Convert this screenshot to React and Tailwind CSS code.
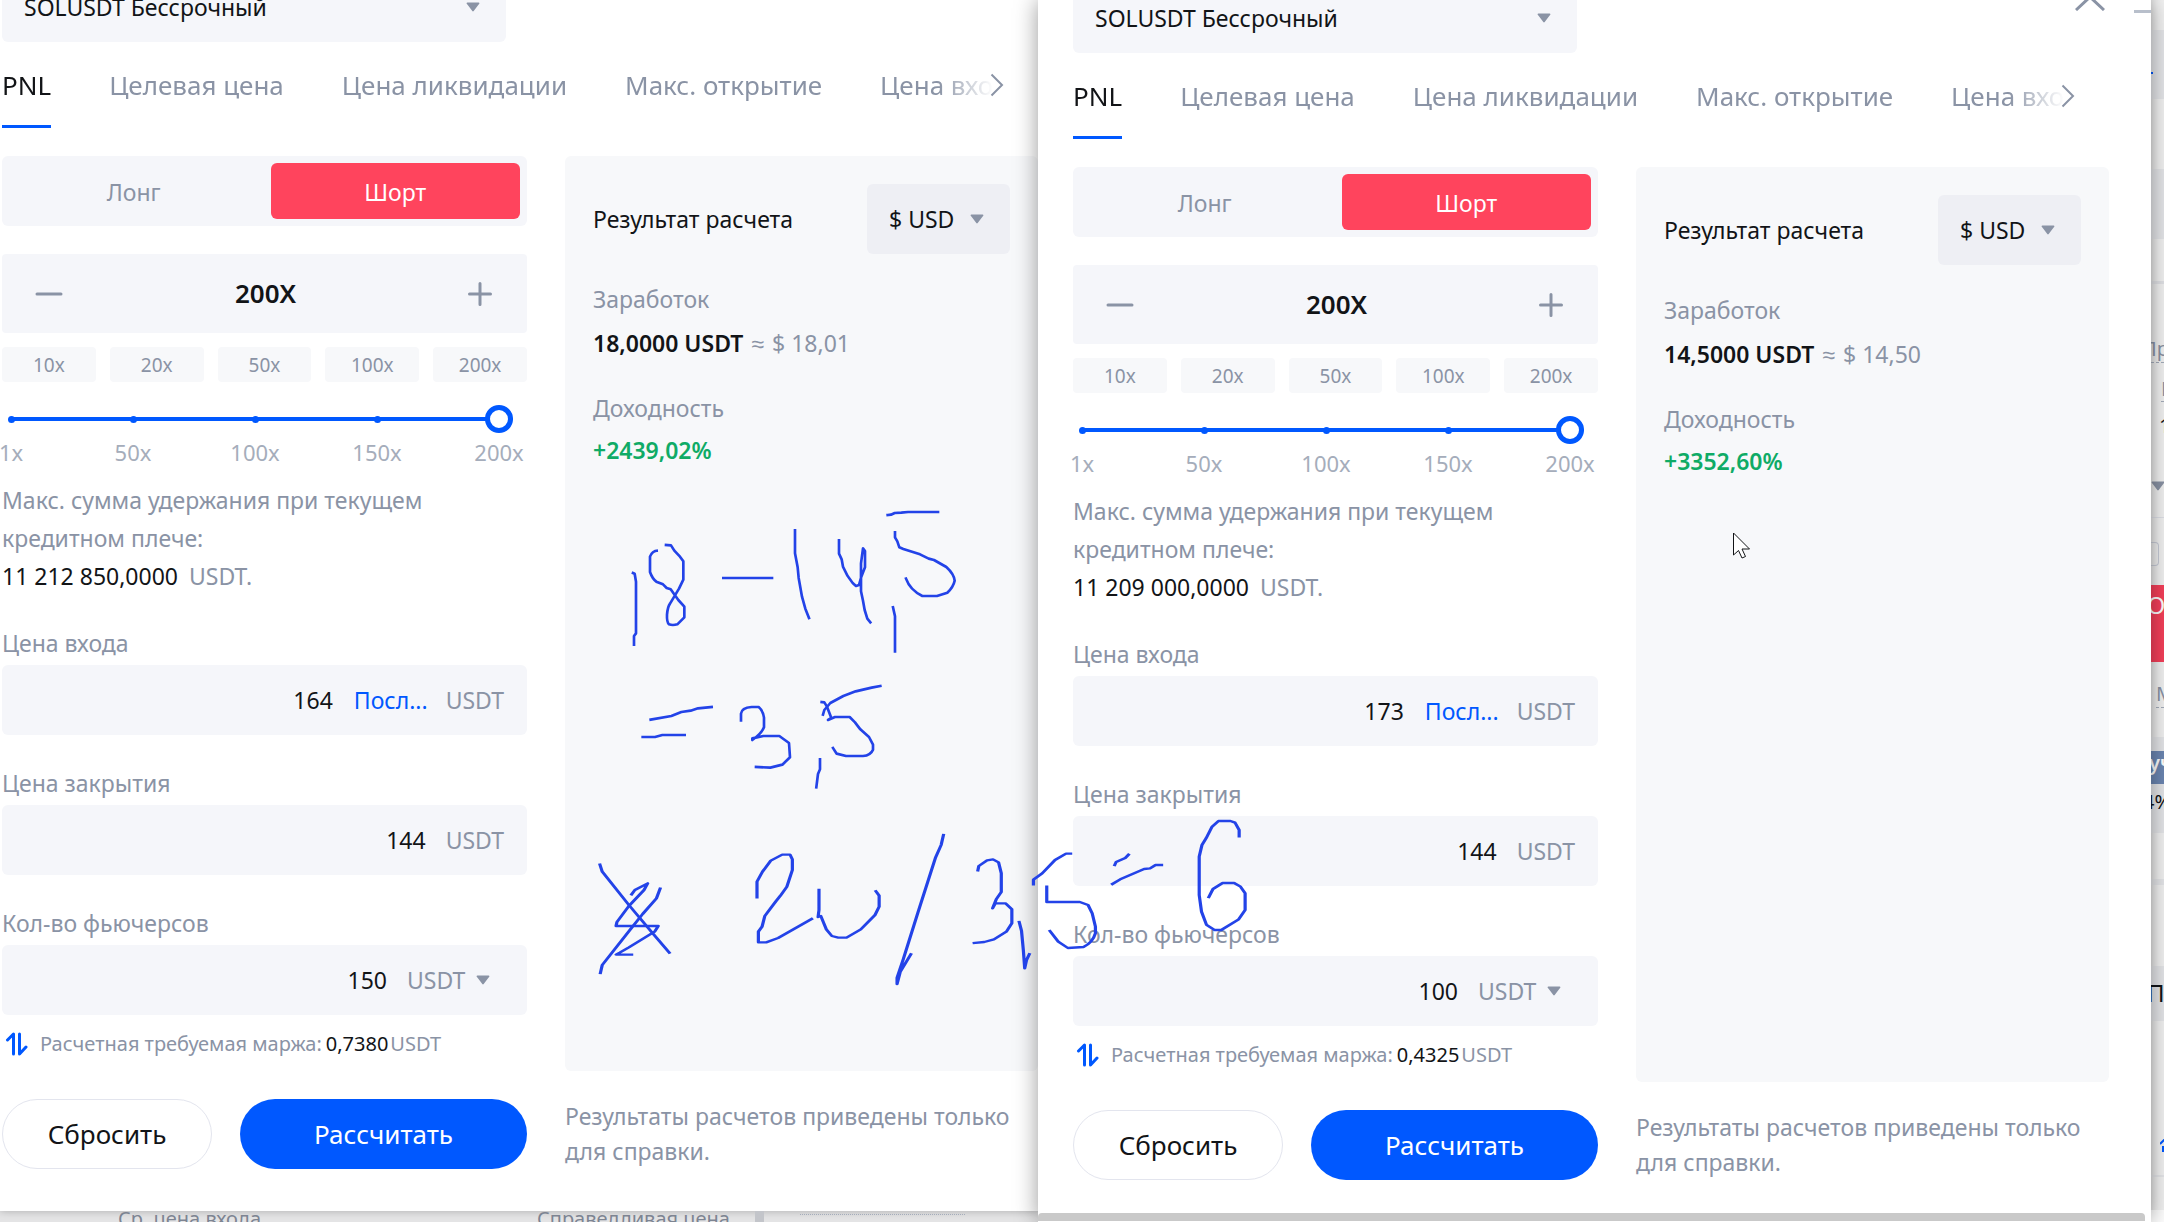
// App.jsx
import React, { useState } from "react";

const TABS = [
  "PNL",
  "Целевая цена",
  "Цена ликвидации",
  "Макс. открытие",
  "Цена входа",
];
const LEVERAGES = ["10x", "20x", "50x", "100x", "200x"];
const MARKS = ["1x", "50x", "100x", "150x", "200x"];

const Triangle = ({ className }) => (
  <svg
    viewBox="0 0 14 10"
    className={`h-[10px] w-[14px] shrink-0 fill-[#8a93a5] ${className || ""}`}
    aria-hidden="true"
  >
    <path d="M1.4 0.5h11.2c.8 0 1.1.8.6 1.3L7.7 9c-.4.5-1 .5-1.4 0L.8 1.800C.3 1.300.6.5 1.400.5z" />
  </svg>
);

const Field = ({ id, label, value, children }) => {
  const [text, setText] = useState(value);

  return (
    <div className="mt-[34px]">
      <label htmlFor={id} className="block leading-7 text-[#8a93a5]">
        {label}
      </label>
      <div className="mt-2 flex h-[70px] items-center rounded-md bg-[#f5f6fa] pr-[23px]">
        <input
          id={id}
          type="text"
          value={text}
          onChange={(e) => setText(e.target.value)}
          className="h-full min-w-0 flex-1 bg-transparent text-right text-[#121417] outline-none"
        />
        {children}
      </div>
    </div>
  );
};

const LeverageSlider = ({ id }) => {
  const [value, setValue] = useState(200);

  return (
    <div>
      <div className="relative mt-[23px] h-7">
        <div className="absolute inset-y-0 -right-[33px] -left-[52px] flex items-center">
          {MARKS.map((mark) => (
            <span key={mark} className="flex flex-1 justify-center">
              <span className="size-[7px] rounded-full bg-[#0058ff]" />
            </span>
          ))}
        </div>
        <div className="relative flex h-7 items-center pr-[14px] pl-[7px]">
          <input
            id={id}
            type="range"
            min="1"
            max="200"
            value={value}
            onChange={(e) => setValue(Number(e.target.value))}
            aria-label="Кредитное плечо"
            className="h-1 w-full appearance-none rounded-full bg-[#0058ff] outline-none [&::-webkit-slider-thumb]:size-7 [&::-webkit-slider-thumb]:appearance-none [&::-webkit-slider-thumb]:rounded-full [&::-webkit-slider-thumb]:border-[5px] [&::-webkit-slider-thumb]:border-[#0058ff] [&::-webkit-slider-thumb]:bg-white"
          />
        </div>
      </div>
      <div className="-mr-[33px] -ml-[52px] flex text-[22px] leading-[38px] text-[#a5adbb]">
        {MARKS.map((mark) => (
          <span key={mark} className="flex-1 text-center">
            {mark}
          </span>
        ))}
      </div>
    </div>
  );
};

const Calculator = ({ id, data, className }) => (
  <section
    className={`flex flex-col bg-white text-[23px] text-[#121417] ${className}`}
  >
    {/* symbol + close */}
    <div className="flex items-start justify-between">
      <div className="grid h-[70px] w-[504px] items-center rounded-md bg-[#f5f6fa]">
        <select
          aria-label="Контракт"
          className="col-start-1 row-start-1 h-full w-full appearance-none bg-transparent pl-[22px] outline-none"
        >
          <option>SOLUSDT Бессрочный</option>
        </select>
        <Triangle className="pointer-events-none col-start-1 row-start-1 mr-[26px] justify-self-end" />
      </div>
      <button type="button" aria-label="Закрыть" className="mr-[4px]">
        <svg
          viewBox="0 0 30 28"
          className="h-7 w-[30px] fill-none stroke-[#8a93a5] stroke-[3]"
        >
          <path d="M1 1l28 26M29 1L1 27" />
        </svg>
      </button>
    </div>

    {/* tabs */}
    <div className="flex h-[86px] items-stretch">
      <div className="flex min-w-0 flex-1 gap-[58px] overflow-hidden text-[26px] whitespace-nowrap [mask-image:linear-gradient(to_right,black_calc(100%_-_100px),transparent_calc(100%_-_45px))]">
        {TABS.map((tab, i) => (
          <button
            key={tab}
            type="button"
            className={
              i === 0
                ? "border-b-[3px] border-[#0058ff] pt-1 text-[#121417]"
                : "border-b-[3px] border-transparent pt-1 text-[#8a93a5]"
            }
          >
            {tab}
          </button>
        ))}
      </div>
      <button
        type="button"
        aria-label="Далее"
        className="-ml-[48px] w-[48px]"
      >
        <svg
          viewBox="0 0 14 24"
          className="h-6 w-[14px] fill-none stroke-[#8a93a5] stroke-2"
        >
          <path d="M1.500 1.500L12 12 1.500 22.500" />
        </svg>
      </button>
    </div>

    <div className="mt-7 grid grid-cols-[525fr_473fr] gap-x-[38px] gap-y-7">
      <form className="min-w-0 pb-[13px]" onSubmit={(e) => e.preventDefault()}>
        <div className="grid h-[70px] grid-cols-2 gap-3 rounded-md bg-[#f5f6fa] p-[7px]">
          <button type="button" className="pt-[2px] text-[#8a93a5]">
            Лонг
          </button>
          <button
            type="button"
            className="rounded-md bg-[#ff445d] pt-[2px] text-white"
          >
            Шорт
          </button>
        </div>

        <div className="mt-7 flex h-[79px] items-center justify-between rounded bg-[#f5f6fa] pr-[35px] pl-[33px]">
          <button type="button" aria-label="Уменьшить">
            <svg
              viewBox="0 0 28 24"
              className="h-6 w-7 stroke-[#8a93a5] stroke-[3]"
              strokeLinecap="round"
            >
              <path d="M2 12h24" />
            </svg>
          </button>
          <span className="text-[26px] font-semibold">200X</span>
          <button type="button" aria-label="Увеличить">
            <svg
              viewBox="0 0 24 24"
              className="size-6 stroke-[#8a93a5] stroke-[3]"
              strokeLinecap="round"
            >
              <path d="M1.500 12h21M12 1.500v21" />
            </svg>
          </button>
        </div>

        <div className="mt-[14px] grid grid-cols-5 gap-[14px]">
          {LEVERAGES.map((leverage) => (
            <button
              key={leverage}
              type="button"
              className="h-[35px] rounded bg-[#f7f8fa] pt-[2px] text-[19px] text-[#8a93a5]"
            >
              {leverage}
            </button>
          ))}
        </div>

        <LeverageSlider id={`${id}-leverage`} />

        <p className="mt-[10px] leading-[38px] text-[#8a93a5]">
          Макс. сумма удержания при текущем
          <br />
          кредитном плече:
          <br />
          <span className="mr-[11px] text-[#121417]">{data.maxHold}</span>
          USDT.
        </p>

        <Field id={`${id}-entry`} label="Цена входа" value={data.entry}>
          <button type="button" className="ml-[21px] text-[#0058ff]">
            Посл...
          </button>
          <span className="ml-[18px] text-[#8a93a5]">USDT</span>
        </Field>
        <Field id={`${id}-close`} label="Цена закрытия" value={data.close}>
          <span className="ml-[20px] text-[#8a93a5]">USDT</span>
        </Field>
        <Field id={`${id}-amount`} label="Кол-во фьючерсов" value={data.amount}>
          <span className="mr-[14px] ml-[20px] grid items-center">
            <select
              aria-label="Единица"
              className="col-start-1 row-start-1 appearance-none bg-transparent pr-[24px] text-[#8a93a5] outline-none"
            >
              <option>USDT</option>
            </select>
            <Triangle className="pointer-events-none col-start-1 row-start-1 justify-self-end" />
          </span>
        </Field>

        <p className="mt-[15px] flex items-center text-[20px] leading-7 whitespace-nowrap text-[#8a93a5]">
          <svg
            viewBox="0 0 24 24"
            className="mr-[11px] ml-[3px] size-6 shrink-0 fill-none stroke-[#0058ff] stroke-[3]"
            strokeLinecap="round"
            strokeLinejoin="round"
          >
            <path d="M2.500 8L8.500 2v20M14.500 2v20l6.500-7" />
          </svg>
          Расчетная требуемая маржа:
          <span className="mr-[2px] ml-1 text-[#121417]">{data.margin}</span>
          USDT
        </p>
      </form>

      <div className="min-w-0 rounded-md bg-[#f7f8fa] p-7">
        <div className="flex items-center justify-between">
          <h2>Результат расчета</h2>
          <div className="grid h-[70px] w-[143px] items-center rounded-md bg-[#eeeff4]">
            <select
              aria-label="Валюта"
              className="col-start-1 row-start-1 h-full w-full appearance-none bg-transparent pl-[22px] outline-none"
            >
              <option>$ USD</option>
            </select>
            <Triangle className="pointer-events-none col-start-1 row-start-1 mr-[26px] justify-self-end" />
          </div>
        </div>
        <p className="mt-7 leading-[34px] text-[#8a93a5]">Заработок</p>
        <p className="mt-[10px] flex gap-2 leading-[34px] text-[#8a93a5]">
          <span className="font-semibold text-[#121417]">
            {data.profit} USDT
          </span>
          <span>≈</span>
          <span>$ {data.profitUsd}</span>
        </p>
        <p className="mt-[31px] leading-[34px] text-[#8a93a5]">Доходность</p>
        <p className="mt-2 leading-[34px] font-semibold text-[#0fab66]">
          {data.roe}
        </p>
      </div>

      <div className="grid h-[70px] grid-cols-[210fr_287fr] gap-7 text-[26px]">
        <button type="button" className="rounded-full border border-[#e3e5ee]">
          Сбросить
        </button>
        <button type="button" className="rounded-full bg-[#0058ff] text-white">
          Рассчитать
        </button>
      </div>
      <p className="leading-[35px] text-[#8a93a5]">
        Результаты расчетов приведены только для справки.
      </p>
    </div>
  </section>
);

const first = {
  maxHold: "11 212 850,0000",
  entry: "164",
  close: "144",
  amount: "150",
  margin: "0,7380",
  profit: "18,0000",
  profitUsd: "18,01",
  roe: "+2439,02%",
};

const second = {
  maxHold: "11 209 000,0000",
  entry: "173",
  close: "144",
  amount: "100",
  margin: "0,4325",
  profit: "14,5000",
  profitUsd: "14,50",
  roe: "+3352,60%",
};

// Slice of the trading page that stays visible beside the windows
const TradeStrip = () => (
  <aside className="flex flex-col overflow-hidden bg-[#f3f3f3] text-[20px] leading-6 text-[#8a93a5] shadow-[inset_6px_0_6px_-4px_rgba(0,0,0,0.08)]">
    <div className="mt-[30px] flex h-[70px] items-center bg-[#e6e7ea]">
      <span className="mt-4 h-[2px] w-[2px] bg-[#0058ff]" />
    </div>
    <div className="mt-[70px] h-[70px] bg-[#e6e7ea]" />
    <div className="mt-[42px] h-[3px] bg-[#e2e3e7]" />
    <div className="mt-[53px] h-[26px] border-b border-dashed border-[#a5adbb]">
      <span className="-ml-[9px]">Пр</span>
    </div>
    <div className="mt-[14px] ml-[10px] h-[26px] border-b border-dashed border-[#a5adbb]">
      П
    </div>
    <div className="mt-[12px] ml-[8px] h-6 text-[#121417]">1</div>
    <Triangle className="mt-[43px]" />
    <div className="mt-[26px] h-px bg-[#dfe1e8]" />
    <div className="mt-[24px] h-[24px] w-[8px] rounded-r border border-l-0 border-[#c9cdd8]" />
    <div className="mt-[19px] h-[77px] bg-[#f6405a] pt-2 text-[24px] text-white">
      <span className="-ml-[4px]">О</span>
    </div>
    <div className="mt-[20px] ml-[5px] h-[27px] border-b border-dashed border-[#a5adbb]">
      М
    </div>
    <div className="mt-[29px] h-[96px] bg-[#e6e7ea] pt-[14px] text-[#121417]">
      <div className="h-[33px] bg-[#6c87b3] font-semibold whitespace-nowrap text-white">
        <span className="-ml-[2px]">уч</span>
      </div>
      <div className="mt-[6px] whitespace-nowrap">
        <span className="-ml-[8px]">4%</span>
      </div>
    </div>
    <div className="mt-[46px] h-[6px] bg-[#e6e7ea]" />
    <div className="mt-[81px] flex h-[56px] items-center bg-[#e6e7ea] text-[24px] text-[#121417]">
      <span className="-ml-[4px]">П</span>
    </div>
    <svg
      viewBox="0 0 14 14"
      className="mt-[118px] ml-[9px] size-[14px] shrink-0 fill-none stroke-[#0058ff] stroke-2"
    >
      <path d="M0 5l4-4 4 4M3 13V7" />
    </svg>
    <div className="mt-[22px] h-[2px] bg-[#e6e7ea]" />
    <div className="mt-[33px] h-[12px] bg-white" />
  </aside>
);

// Freehand pen strokes over both windows
const PenStrokes = () => (
  <svg
    width="1300"
    height="1222"
    viewBox="0 0 1300 1222"
    className="pointer-events-none absolute top-0 left-0 fill-none stroke-[#2343e8]"
    strokeLinecap="square"
    strokeLinejoin="round"
    role="img"
    aria-label="18 − 14,5 = 3,5; 20 / 3,5 = 6"
  >
    <g transform="translate(560 480) scale(0.33333)" strokeWidth="8">
      <path d="M219 279L224 281 228 305 228 460 222 468V494" />
      <path d="M290 212Q276 213 270 230V276Q277 296 289 305L309 313 320 324 332 328 355 360 373 380V412L352 433Q338 437 327 433 320 427 321 404 323 380 330 371L357 326 370 299V244L360 230 343 212 333 196 318 195" />
      <path d="M490 294H636" />
      <path d="M705 151V220L713 262 716 294 726 350 736 386 747 414" />
      <path d="M837 181V221L845 238 849 260Q860 287 878 309L888 318 897 315 904 290 915 262V213L909 205 903 250V334L909 362 914 390 922 416 931 427" />
      <path d="M983 105L993 104 1004 99 1024 98 1044 96H1134" />
      <path d="M1005 157V172L1012 184 1018 202 1030 207 1080 223 1106 236 1122 240 1159 261Q1182 282 1184 302 1180 321 1162 338L1131 348H1087Q1050 330 1038 296" />
      <path d="M999 382L1005 409V514" />
      <path d="M272 719L334 708 364 696 392 692 414 685 455 681" />
      <path d="M248 771H285L307 765H374" />
      <path d="M543 721V701Q545 683 575 681H596Q609 692 612 713V742Q604 762 577 780L577 775 610 768H658L687 789 690 832 667 854 631 863 588 861" />
      <path d="M780 838V868L774 882 769 922" />
      <path d="M961 618L935 623 887 634 850 648 811 669 793 690 789 704" />
      <path d="M785 666L793 667 801 680 814 714 804 720 825 711H869L885 727 901 748 927 771 939 794V809Q932 826 909 828H858L830 821 819 804" />
    </g>
    <g transform="translate(560 790) scale(0.4592 0.33333)" strokeWidth="7">
      <path d="M87 224L92 245 150 345 202 430 238 488" />
      <path d="M156 313L163 300 191 280 183 300 150 348 124 396 122 408H214L206 425 150 472 130 488 122 494H156" />
      <path d="M218 296L210 325 180 372 155 415 92 525 88 549" />
      <path d="M429 322V275L441 245 459 212 484 194H501L506 208V240L494 290 480 317 470 334 446 378 440 410 432 425V457H449L475 444 548 387" />
      <path d="M564 300V360L562 381 568 378 580 418 592 438 606 443H624L655 418 686 375 695 350V317L688 304" />
      <path d="M835 135L830 165 818 202 780 365 747 510 734 563V582L741 545 764 493" />
      <path d="M910 241L912 228 930 211 943 208 955 217 961 250V306L950 328 942 355 948 340H970L984 358V400L972 425 945 448 924 456 902 459" />
      <path d="M1000 396L1005 422 1009 480 1012 535 1016 510 1022 493" />
      <path d="M1112 191H1102L1078 210 1050 250 1031 269V283" />
      <path d="M1060 290V336H1132L1150 345 1159 370 1166 410V430Q1160 458 1140 471L1106 474 1085 455 1067 423" />
      <path d="M1208 225L1211 216 1231 204 1238 194" />
      <path d="M1203 282L1220 268 1272 237 1285 235 1297 225H1310" />
      <path d="M1479 139V120L1470 98 1460 93H1434L1420 110 1407 145 1398 165 1392 200V315L1397 365 1408 405 1425 420H1440L1478 388 1492 360V310L1482 290 1468 279H1443L1422 297 1413 321" />
    </g>
  </svg>
);

const App = () => {
  return (
    <main className="relative grid h-screen grid-cols-[1038fr_1113fr_13px] overflow-hidden bg-[#e4e4e5] font-['Noto_Sans','Liberation_Sans',sans-serif]">
      <div className="min-w-0">
        <Calculator
          id="first"
          data={first}
          className="-mt-7 pb-[42px] pl-[2px] shadow-[0_0_8px_rgba(0,0,0,0.25)]"
        />
        <div className="flex h-[11px] items-start overflow-hidden text-[20px] leading-6 whitespace-nowrap text-[#7d8492]">
          <span className="-mt-1 ml-[118px] w-[419px]">Ср. цена входа</span>
          <span className="-mt-1 w-[218px]">Справедливая цена</span>
          <span className="h-full w-[9px] bg-[#c3c5ca]" />
          <span className="mt-[3px] ml-[36px] w-[165px] border-t border-dotted border-[#a5adbb]" />
        </div>
      </div>

      <div className="relative min-w-0 bg-white shadow-[0_0_22px_rgba(0,0,0,0.4)]">
        <Calculator
          id="second"
          data={second}
          className="-mt-[17px] pr-[42px] pb-[33px] pl-[35px]"
        />
        <div className="mr-[6px] h-2 rounded-t bg-[#c9c9c9]" />
        <span className="absolute top-[10px] right-0 h-[3px] w-[17px] bg-[#b8bfcb]" />
      </div>

      <TradeStrip />

      <PenStrokes />
      <svg
        viewBox="0 0 18 27"
        className="pointer-events-none absolute top-[532px] left-[1733px] h-[27px] w-[18px] fill-white stroke-[#121417]"
        aria-hidden="true"
      >
        <path d="M.5 1v22l5-4.500 3.500 7.500 3.500-1.500-3.500-7.500h7.500z" />
      </svg>
    </main>
  );
};

export default App;
